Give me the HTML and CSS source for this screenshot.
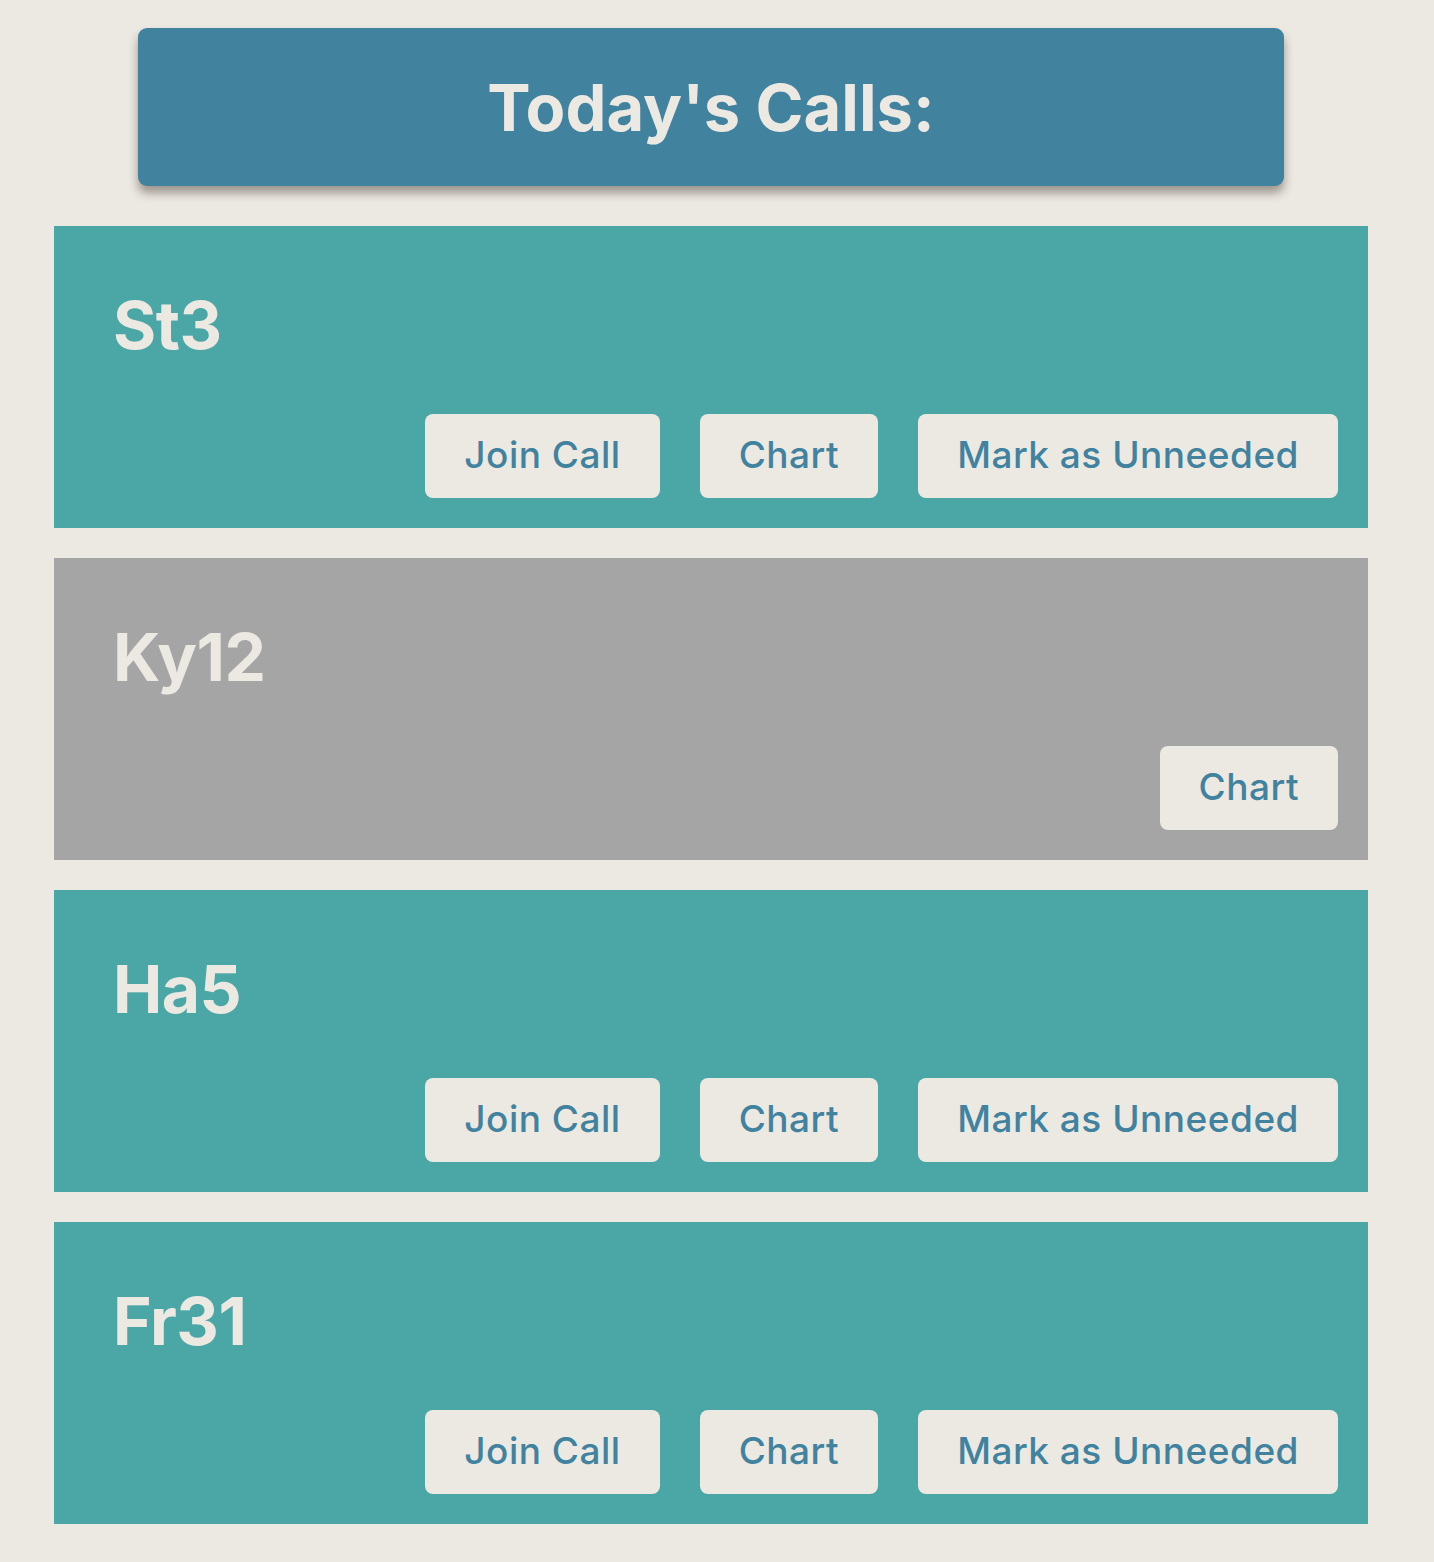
FILE: index.html
```html
<!DOCTYPE html>
<html lang="en">
<head>
<meta charset="utf-8">
<title>Today's Calls</title>
<link rel="stylesheet" href="styles.css">
</head>
<body>
<div class="page">
  <header class="banner">
    <h1 class="banner-title">Today's Calls:</h1>
  </header>
  <main class="calls">
    <section class="call call--active">
      <h2 class="call-name">St3</h2>
      <div class="call-actions">
        <button class="btn">Join Call</button>
        <button class="btn">Chart</button>
        <button class="btn">Mark as Unneeded</button>
      </div>
    </section>
    <section class="call call--done">
      <h2 class="call-name">Ky12</h2>
      <div class="call-actions">
        <button class="btn">Chart</button>
      </div>
    </section>
    <section class="call call--active">
      <h2 class="call-name">Ha5</h2>
      <div class="call-actions">
        <button class="btn">Join Call</button>
        <button class="btn">Chart</button>
        <button class="btn">Mark as Unneeded</button>
      </div>
    </section>
    <section class="call call--active">
      <h2 class="call-name">Fr31</h2>
      <div class="call-actions">
        <button class="btn">Join Call</button>
        <button class="btn">Chart</button>
        <button class="btn">Mark as Unneeded</button>
      </div>
    </section>
  </main>
</div>
</body>
</html>
```
FILE: styles.css
```css
* { box-sizing: border-box; }

html, body {
  margin: 0;
  padding: 0;
}

body {
  background: #ece8e2;
  font-family: Inter, "Open Sans", "Liberation Sans", sans-serif;
  min-height: 1562px;
}

.page {
  width: 1314px;
  margin-left: 54px;
  padding-top: 28px;
  padding-bottom: 38px;
}

.banner {
  margin: 0 84px;
  height: 158px;
  background: #41829f;
  border-radius: 9px;
  box-shadow: 0 7px 10px rgba(60, 50, 40, 0.45);
  display: flex;
  align-items: center;
  justify-content: center;
}

.banner-title {
  margin: 0;
  color: #ece8e2;
  font-size: 65px;
  font-weight: 700;
  line-height: 1;
}

.calls {
  margin-top: 40px;
  display: flex;
  flex-direction: column;
  gap: 30px;
}

.call {
  padding: 66px 30px 30px 59px;
  display: flex;
  flex-direction: column;
}

.call--active { background: #4ba7a6; }
.call--done { background: #a5a5a5; }

.call-name {
  margin: 0;
  color: #ece8e2;
  font-size: 66px;
  font-weight: 700;
  line-height: 66px;
  height: 66px;
  letter-spacing: -0.5px;
}

.call-actions {
  margin-top: 56px;
  display: flex;
  justify-content: flex-end;
  gap: 40px;
}

.btn {
  height: 84px;
  padding: 0 39px 3px;
  border: none;
  border-radius: 8px;
  background: #ece9e3;
  color: #41829f;
  font-family: inherit;
  font-size: 37px;
  font-weight: 500;
  line-height: 1;
  letter-spacing: 0.5px;
  cursor: pointer;
}
```
